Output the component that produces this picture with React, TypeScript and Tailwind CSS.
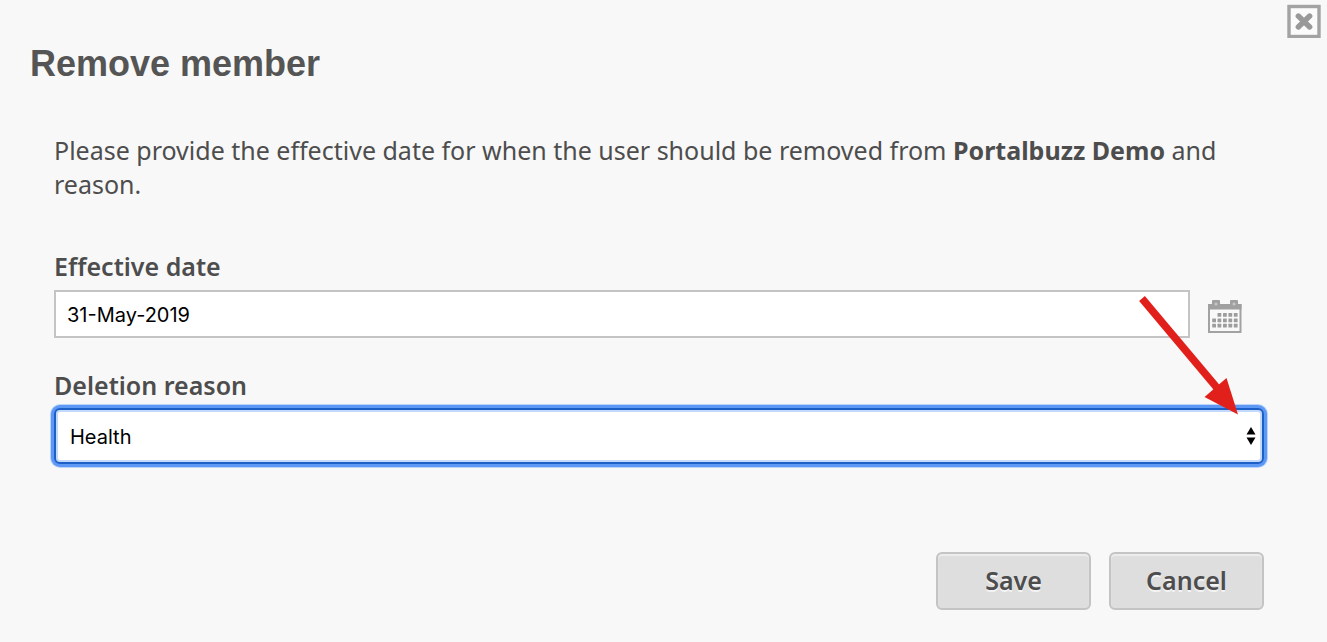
import { useState } from "react";

function CloseIcon() {
  return (
    <svg viewBox="0 0 34 34" className="size-[34px]" aria-hidden="true">
      <rect x="2" y="2.500" width="30" height="30" fill="#fbfbfb" stroke="#a3a3a3" strokeWidth="3.4" />
      <path d="M11.3 12.200 22.7 23.200M22.7 12.200 11.3 23.200" transform="translate(0 -.2)" stroke="#999" strokeWidth="5.4" strokeLinecap="round" />
    </svg>
  );
}

const calendarDots = [
  [9.5, 13.5], [15, 13.5], [20.4, 13.5], [25.8, 13.5],
  [4.2, 18.9], [9.5, 18.9], [15, 18.9], [20.4, 18.9], [25.8, 18.9],
  [4.2, 24.2], [9.5, 24.2], [15, 24.2], [20.4, 24.2], [25.8, 24.2],
];

function CalendarIcon() {
  return (
    <svg viewBox="0 0 34 34" className="h-[34px] w-[34px]" aria-hidden="true">
      <rect x="1" y="5" width="31.5" height="27" fill="#f9f9f9" stroke="#a2a2a2" strokeWidth="2" />
      <path d="M0 4H33.5V9.6H0Z" fill="#a0a0a0" />
      <rect x="4" y="0" width="8" height="6" rx="1" fill="#a0a0a0" />
      <rect x="22" y="0" width="8" height="6" rx="1" fill="#a0a0a0" />
      <circle cx="8" cy="4" r="1.5" fill="#c6c6c6" />
      <circle cx="26" cy="4" r="1.5" fill="#c6c6c6" />
      {calendarDots.map(([x, y]) => (
        <rect key={`${x}-${y}`} x={x} y={y - 0.5} width="3.8" height="3.8" rx="0.5" fill="#9d9d9d" />
      ))}
    </svg>
  );
}

function Pointer() {
  return (
    <svg viewBox="0 0 100 120" className="pointer-events-none absolute top-[5px] right-[25px] z-10 h-[120px] w-[100px]" aria-hidden="true">
      <path d="M3 3.5 79 94" stroke="#e2201b" strokeWidth="7.5" />
      <path d="M99 119.5 65.5 102 87.5 83Z" fill="#e2201b" />
    </svg>
  );
}

const buttonClass =
  "h-[58px] w-[155px] rounded-md border-2 border-[#c4c4c4] bg-[#dedede] pb-[2px] text-[25px] leading-8 font-semibold text-[#4d4d4d] shadow-[inset_0_2px_1px_#ededed] [text-shadow:0_2px_0_#f3f3f3]";

export default function App() {
  const [date, setDate] = useState("31-May-2019");
  const [reason, setReason] = useState("Health");

  return (
    <main className="relative min-h-screen bg-[#f8f8f8] pt-10 pb-8 font-['Noto_Sans',sans-serif] text-[#4d4d4d]">
      <button type="button" aria-label="Close" className="absolute top-1 right-[6px]">
        <CloseIcon />
      </button>
      <h1 className="px-[30px] font-['Liberation_Sans',sans-serif] text-[36px] leading-[48px] font-bold text-[#555]">
        Remove member
      </h1>
      <form className="mt-[45px] pr-[63px] pl-[54px]" onSubmit={(e) => e.preventDefault()}>
        <p className="text-[25px] leading-[34px]">
          Please provide the effective date for when the user should be removed from{" "}
          <strong className="font-bold">Portalbuzz Demo</strong> and reason.
        </p>

        <label htmlFor="date" className="mt-12 block text-[25px] leading-[34px] font-semibold">
          Effective date
        </label>
        <div className="relative mt-[7px] flex items-center">
          <input
            id="date"
            type="text"
            value={date}
            onChange={(e) => setDate(e.target.value)}
            className="h-12 min-w-0 grow border-2 border-[#c4c4c4] bg-white px-[11px] pt-[2px] font-['Inter',sans-serif] text-[20px] text-black outline-none"
          />
          <button type="button" aria-label="Choose a date" className="mt-[6px] mr-[22px] ml-[18px]">
            <CalendarIcon />
          </button>
          <Pointer />
        </div>

        <label htmlFor="reason" className="mt-[30px] block text-[25px] leading-[34px] font-semibold">
          Deletion reason
        </label>
        <div className="relative mt-[6px]">
          <select
            id="reason"
            value={reason}
            onChange={(e) => setReason(e.target.value)}
            className="block h-14 w-full appearance-none rounded-md border-2 border-[#1c5fc6] bg-white px-[14px] pt-[2px] font-['Inter',sans-serif] text-[20px] text-black shadow-[0_0_0_3px_#5e98f5,0_0_0_4px_#bcd5fb,inset_0_0_0_2px_#c2d9fb] outline-none"
          >
            <option>Health</option>
          </select>
          <svg viewBox="0 0 10 18" className="pointer-events-none absolute top-[19px] right-2 h-[18px] w-[10px]" aria-hidden="true">
            <path d="M5 0 9.5 7.5H.5ZM5 18 .5 10.5h9Z" fill="#000" />
          </svg>
        </div>

        <div className="mt-[88px] flex justify-end gap-[18px]">
          <button type="submit" className={buttonClass}>Save</button>
          <button type="button" className={buttonClass}>Cancel</button>
        </div>
      </form>
    </main>
  );
}
